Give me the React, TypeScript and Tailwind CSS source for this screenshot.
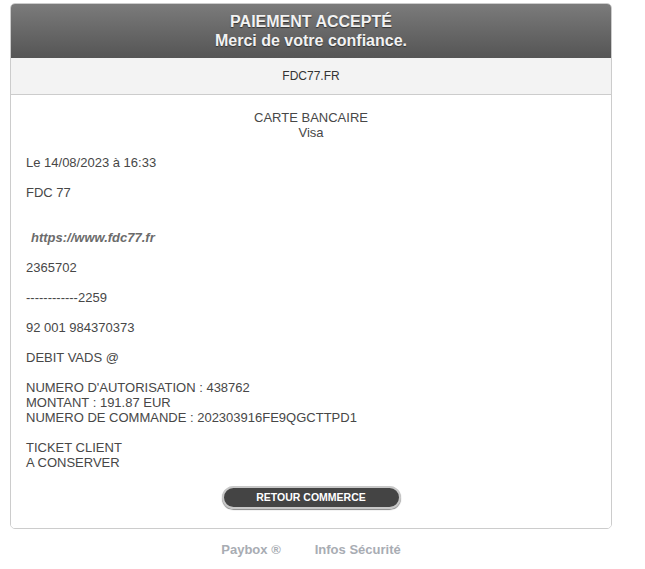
export default function App() {
  const lines: (string | null)[] = [
    "Le 14/08/2023 à 16:33",
    null,
    "FDC 77",
    null,
    null,
    "__LINK__",
    null,
    "2365702",
    null,
    "------------2259",
    null,
    "92 001 984370373",
    null,
    "DEBIT VADS @",
    null,
    "NUMERO D'AUTORISATION : 438762",
    "MONTANT : 191.87 EUR",
    "NUMERO DE COMMANDE : 202303916FE9QGCTTPD1",
    null,
    "TICKET CLIENT",
    "A CONSERVER",
  ];

  return (
    <div className="min-h-screen bg-white font-['Liberation_Sans',Arial,sans-serif]">
      <div className="ml-[10px] w-[602px] pt-[3px]">
        <div className="rounded-[5px] border border-[#cccccc] overflow-hidden">
          {/* header */}
          <div className="bg-gradient-to-b from-[#7b7b7b] to-[#555555] pt-[8px] pb-[8px] text-center text-[16px] font-bold leading-[19px] text-[#f2f2f2] [text-shadow:0_1px_1px_#333]">
            <div>PAIEMENT ACCEPTÉ</div>
            <div>Merci de votre confiance.</div>
          </div>

          <div className="bg-[#f3f3f3] border-b border-[#cccccc] py-[10px] text-center text-[12px] leading-[16px] text-[#333333]">
            FDC77.FR
          </div>

          {/* ticket */}
          <div className="bg-white px-[15px] pt-[15px] pb-[19px] text-[13px] leading-[15px] text-[#474747]">
            <div className="text-center">
              <div>CARTE BANCAIRE</div>
              <div>Visa</div>
            </div>
            <div className="h-[15px]" />
            {lines.map((l, i) =>
              l === null ? (
                <div key={i} className="h-[15px]" />
              ) : l === "__LINK__" ? (
                <div key={i} className="pl-[5px] font-bold italic text-[#6b6b6b]">
                  https://www.fdc77.fr
                </div>
              ) : (
                <div key={i}>{l}</div>
              )
            )}

            <div className="flex justify-center mt-[16px]">
              <button className="w-[179px] h-[23px] rounded-full bg-[#444444] border-[2px] border-[#c8c8c8] shadow-[0_1px_1px_#888] text-white text-[10.5px] font-bold leading-none">
                RETOUR COMMERCE
              </button>
            </div>
          </div>
        </div>

        <div className="flex justify-center gap-[34px] pt-[13px] text-[13px] font-bold leading-[15px] text-[#a8acb3]">
          <span>Paybox ®</span>
          <span>Infos Sécurité</span>
        </div>
      </div>
    </div>
  );
}
